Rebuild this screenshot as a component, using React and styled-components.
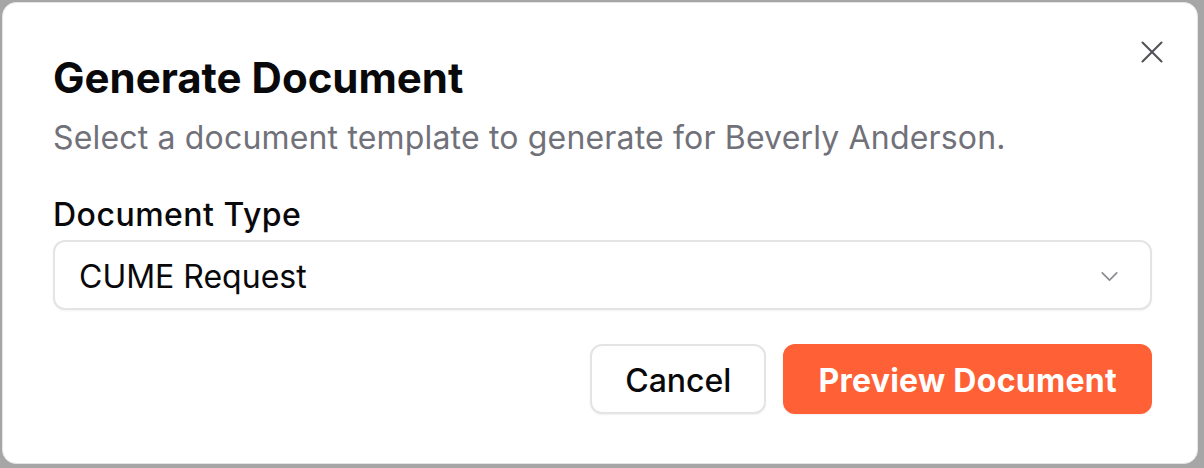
import styled, { createGlobalStyle } from 'styled-components';

const Global = createGlobalStyle`
  html, body {
    margin: 0;
    padding: 0;
    background: #a6a6a6;
  }
  body {
    font-family: Inter, "Noto Sans", sans-serif;
    -webkit-font-smoothing: antialiased;
  }
`;

const Dialog = styled.div`
  position: relative;
  box-sizing: border-box;
  margin: 2px 0 0 2px;
  width: 1196px;
  height: 462px;
  background: #ffffff;
  border: 1px solid #e4e4e7;
  border-radius: 14px;
  padding: 50px 45px 48px 50px;
  display: flex;
  flex-direction: column;
`;

const CloseButton = styled.button`
  position: absolute;
  top: 30px;
  right: 26px;
  width: 38px;
  height: 38px;
  padding: 0;
  border: none;
  background: transparent;
  color: #3f3f46;
  display: flex;
  align-items: center;
  justify-content: center;
  opacity: 0.9;
`;

const Header = styled.div`
  display: flex;
  flex-direction: column;
  gap: 13px;
`;

const Title = styled.h2`
  margin: 0;
  font-size: 42px;
  line-height: 50px;
  font-weight: 700;
  color: #09090b;
`;

const Description = styled.p`
  margin: 0;
  font-size: 32px;
  line-height: 44px;
  letter-spacing: 0.17px;
  color: #71717a;
`;

const Field = styled.div`
  margin-top: 39px;
  display: flex;
  flex-direction: column;
  gap: 9px;
`;

const Label = styled.label`
  font-size: 32px;
  line-height: 32px;
  font-weight: 500;
  letter-spacing: 0.5px;
  color: #09090b;
`;

const Select = styled.button`
  box-sizing: border-box;
  width: 100%;
  height: 70px;
  padding: 2px 26px 0 24px;
  background: #ffffff;
  border: 2px solid #e4e4e7;
  border-radius: 12px;
  box-shadow: 0 1px 2px rgba(0, 0, 0, 0.05);
  display: flex;
  align-items: center;
  justify-content: space-between;
  font-family: inherit;
  font-size: 32px;
  color: #09090b;
  text-align: left;
`;

const Footer = styled.div`
  margin-top: 34px;
  display: flex;
  justify-content: flex-end;
  gap: 17px;
`;

const Button = styled.button`
  box-sizing: border-box;
  height: 70px;
  padding: 2px 33px 0;
  border-radius: 12px;
  font-family: inherit;
  font-size: 32px;
  font-weight: ${(p) => (p.$primary ? 700 : 500)};
  letter-spacing: ${(p) => (p.$primary ? '0.28px' : '0')};
  color: ${(p) => (p.$primary ? '#ffffff' : '#09090b')};
  background: ${(p) => (p.$primary ? '#ff6035' : '#ffffff')};
  border: 2px solid ${(p) => (p.$primary ? '#ff6035' : '#e4e4e7')};
  box-shadow: 0 1px 2px rgba(0, 0, 0, 0.06);
`;

export default function App() {
  return (
    <>
      <Global />
      <Dialog role="dialog">
        <CloseButton aria-label="Close">
          <svg width="38" height="38" viewBox="0 0 24 24" fill="none" stroke="currentColor" strokeWidth="1.3" strokeLinecap="round" strokeLinejoin="round">
            <path d="M18 6 6 18" />
            <path d="m6 6 12 12" />
          </svg>
        </CloseButton>
        <Header>
          <Title>Generate Document</Title>
          <Description>Select a document template to generate for Beverly Anderson.</Description>
        </Header>
        <Field>
          <Label>Document Type</Label>
          <Select>
            <span>CUME Request</span>
            <svg width="29" height="29" viewBox="0 0 24 24" fill="none" stroke="#71717a" strokeWidth="1.4" strokeLinecap="round" strokeLinejoin="round" opacity="0.8">
              <path d="m6 9 6 6 6-6" />
            </svg>
          </Select>
        </Field>
        <Footer>
          <Button>Cancel</Button>
          <Button $primary>Preview Document</Button>
        </Footer>
      </Dialog>
    </>
  );
}
